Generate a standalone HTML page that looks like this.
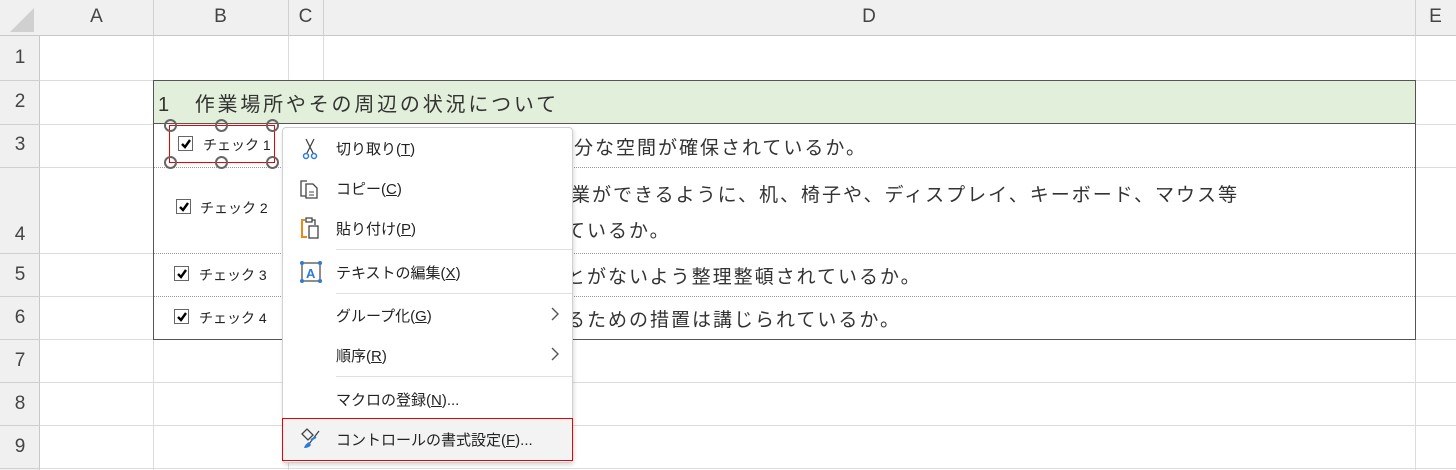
<!DOCTYPE html>
<html><head><meta charset="utf-8"><style>
*{margin:0;padding:0;box-sizing:border-box}
body{width:1456px;height:470px;overflow:hidden;background:#fff;position:relative;font-family:"Liberation Sans","Noto Sans CJK JP",sans-serif;color:#333}
.a{position:absolute}
.hd{background:#f0f0f0;color:#444;font-size:19px;text-align:center}
.vl{position:absolute;width:1px;background:#dcdcdc}
.hl{position:absolute;height:1px;background:#dcdcdc}
.dt{position:absolute;height:0;border-top:1px dotted #999}
.t{position:absolute;font-size:19px;color:#333;white-space:nowrap;letter-spacing:2px}
.cb{position:absolute;width:15px;height:15px;border:1px solid #666;background:#fff}
.cb svg{position:absolute;left:1px;top:1px}
.cl{position:absolute;font-size:14px;color:#222;white-space:nowrap}
.h{position:absolute;width:13px;height:13px;border:2.5px solid #666;border-radius:50%;background:transparent}
.mi{position:absolute;left:336px;font-size:15px;color:#222;white-space:nowrap}
.sep{position:absolute;left:336px;width:236px;height:1px;background:#e0e0e0}
u{text-decoration:underline}
</style></head><body>
<div class="a hd" style="left:0;top:0;width:1456px;height:36px;border-bottom:1px solid #c8c8c8"></div>
<div class="a hd" style="left:0;top:36px;width:40px;height:434px;border-right:1px solid #c8c8c8"></div>
<svg class="a" style="left:10px;top:8px" width="24" height="24"><polygon points="24,0 24,24 0,24" fill="#d0d0d0"/></svg>
<div class="a hd" style="left:40px;top:6px;width:113px;background:none">A</div>
<div class="a hd" style="left:153px;top:6px;width:135px;background:none">B</div>
<div class="a hd" style="left:288px;top:6px;width:35px;background:none">C</div>
<div class="a hd" style="left:323px;top:6px;width:1092px;background:none">D</div>
<div class="a hd" style="left:1415px;top:6px;width:41px;background:none">E</div>
<div class="vl" style="left:153px;top:0;height:36px;background:#d0d0d0"></div>
<div class="vl" style="left:288px;top:0;height:36px;background:#d0d0d0"></div>
<div class="vl" style="left:323px;top:0;height:36px;background:#d0d0d0"></div>
<div class="vl" style="left:1415px;top:0;height:36px;background:#d0d0d0"></div>
<div class="a hd" style="left:0;top:47px;width:40px;background:none">1</div>
<div class="a hd" style="left:0;top:91px;width:40px;background:none">2</div>
<div class="a hd" style="left:0;top:134px;width:40px;background:none">3</div>
<div class="a hd" style="left:0;top:224px;width:40px;background:none">4</div>
<div class="a hd" style="left:0;top:264px;width:40px;background:none">5</div>
<div class="a hd" style="left:0;top:307px;width:40px;background:none">6</div>
<div class="a hd" style="left:0;top:350px;width:40px;background:none">7</div>
<div class="a hd" style="left:0;top:393px;width:40px;background:none">8</div>
<div class="a hd" style="left:0;top:436px;width:40px;background:none">9</div>
<div class="hl" style="left:0;top:80px;width:40px;background:#d0d0d0"></div>
<div class="hl" style="left:0;top:124px;width:40px;background:#d0d0d0"></div>
<div class="hl" style="left:0;top:167px;width:40px;background:#d0d0d0"></div>
<div class="hl" style="left:0;top:253px;width:40px;background:#d0d0d0"></div>
<div class="hl" style="left:0;top:296px;width:40px;background:#d0d0d0"></div>
<div class="hl" style="left:0;top:339px;width:40px;background:#d0d0d0"></div>
<div class="hl" style="left:0;top:382px;width:40px;background:#d0d0d0"></div>
<div class="hl" style="left:0;top:425px;width:40px;background:#d0d0d0"></div>
<div class="hl" style="left:0;top:468px;width:40px;background:#d0d0d0"></div>
<div class="hl" style="left:40px;top:80px;width:1416px"></div>
<div class="hl" style="left:40px;top:124px;width:1416px"></div>
<div class="hl" style="left:40px;top:167px;width:1416px"></div>
<div class="hl" style="left:40px;top:253px;width:1416px"></div>
<div class="hl" style="left:40px;top:296px;width:1416px"></div>
<div class="hl" style="left:40px;top:339px;width:1416px"></div>
<div class="hl" style="left:40px;top:382px;width:1416px"></div>
<div class="hl" style="left:40px;top:425px;width:1416px"></div>
<div class="hl" style="left:40px;top:468px;width:1416px"></div>
<div class="vl" style="left:153px;top:36px;height:434px"></div>
<div class="vl" style="left:288px;top:36px;height:44px"></div>
<div class="vl" style="left:323px;top:36px;height:44px"></div>
<div class="vl" style="left:288px;top:339px;height:131px"></div>
<div class="vl" style="left:1415px;top:36px;height:434px"></div>
<div class="a" style="left:153px;top:80px;width:1263px;height:260px;border:1px solid #555;background:#fff"></div>
<div class="a" style="left:154px;top:81px;width:1261px;height:43px;background:#e2efda;border-bottom:1px solid #555"></div>
<div class="dt" style="left:154px;top:167px;width:1261px"></div>
<div class="dt" style="left:154px;top:253px;width:1261px"></div>
<div class="dt" style="left:154px;top:296px;width:1261px"></div>
<div class="t" style="left:158px;top:88px;font-size:20px;letter-spacing:2.8px">1　作業場所やその周辺の状況について</div>
<div class="t" style="left:574px;top:133px">分な空間が確保されているか。</div>
<div class="t" style="left:571px;top:180px">業ができるように、机、椅子や、ディスプレイ、キーボード、マウス等</div>
<div class="t" style="left:566px;top:216px">ているか。</div>
<div class="t" style="left:566px;top:262px">とがないよう整理整頓されているか。</div>
<div class="t" style="left:566px;top:305px">るための措置は講じられているか。</div>
<div class="cb" style="left:178px;top:136px"><svg width="12" height="12"><path d="M2 6 L5 9 L10 2" stroke="#000" stroke-width="2.4" fill="none"/></svg></div>
<div class="cl" style="left:203px;top:135px">チェック 1</div>
<div class="cb" style="left:176px;top:199px"><svg width="12" height="12"><path d="M2 6 L5 9 L10 2" stroke="#000" stroke-width="2.4" fill="none"/></svg></div>
<div class="cl" style="left:200px;top:198px">チェック 2</div>
<div class="cb" style="left:174px;top:266px"><svg width="12" height="12"><path d="M2 6 L5 9 L10 2" stroke="#000" stroke-width="2.4" fill="none"/></svg></div>
<div class="cl" style="left:199px;top:265px">チェック 3</div>
<div class="cb" style="left:174px;top:309px"><svg width="12" height="12"><path d="M2 6 L5 9 L10 2" stroke="#000" stroke-width="2.4" fill="none"/></svg></div>
<div class="cl" style="left:199px;top:308px">チェック 4</div>
<div class="a" style="left:169px;top:125px;width:106px;height:38px;border:1.5px solid #e00"></div>
<div class="h" style="left:164px;top:119px"></div>
<div class="h" style="left:215px;top:119px"></div>
<div class="h" style="left:266px;top:119px"></div>
<div class="h" style="left:164px;top:156px"></div>
<div class="h" style="left:215px;top:156px"></div>
<div class="h" style="left:266px;top:156px"></div>
<div class="a" style="left:282px;top:127px;width:291px;height:336px;background:#fff;border:1px solid #d0d0d0;border-radius:4px;box-shadow:1px 2px 4px rgba(0,0,0,.15)"></div>
<svg class="a" style="left:298px;top:137px" width="24" height="24"><path d="M8 2 L15 16 M16 2 L9 16" stroke="#444" stroke-width="1.3" fill="none"/><circle cx="8" cy="19" r="2.5" stroke="#2e7bd6" stroke-width="1.5" fill="none"/><circle cx="16" cy="19" r="2.5" stroke="#2e7bd6" stroke-width="1.5" fill="none"/></svg>
<div class="mi" style="top:138px">切り取り(<u>T</u>)</div>
<svg class="a" style="left:298px;top:177px" width="24" height="24"><path d="M9 4 H3 V19 H8" stroke="#444" stroke-width="1.3" fill="none"/><path d="M8 7 H15 L19 11 V21 H8 Z" stroke="#444" stroke-width="1.3" fill="none"/><path d="M11 15 H16 M11 18 H16" stroke="#444" stroke-width="1"/></svg>
<div class="mi" style="top:178px">コピー(<u>C</u>)</div>
<svg class="a" style="left:298px;top:216px" width="24" height="24"><path d="M7 4 H4 V21 H9" stroke="#e88a1a" stroke-width="2" fill="none"/><path d="M8 2 H14 V6 H8 Z M14 4 H17 V9" stroke="#444" stroke-width="1.3" fill="none"/><rect x="11" y="10" width="9" height="12" stroke="#444" stroke-width="1.3" fill="none"/></svg>
<div class="mi" style="top:218px">貼り付け(<u>P</u>)</div>
<div class="sep" style="top:249px"></div>
<svg class="a" style="left:298px;top:259px" width="26" height="26"><rect x="4" y="4" width="18" height="18" stroke="#444" stroke-width="1.2" fill="none"/><circle cx="4" cy="4" r="2" fill="#2e7bd6"/><circle cx="22" cy="4" r="2" fill="#2e7bd6"/><circle cx="4" cy="22" r="2" fill="#2e7bd6"/><circle cx="22" cy="22" r="2" fill="#2e7bd6"/><text x="8" y="19" font-size="13" font-weight="bold" fill="#2e7bd6" font-family="Liberation Sans">A</text></svg>
<div class="mi" style="top:262px">テキストの編集(<u>X</u>)</div>
<div class="sep" style="top:293px"></div>
<div class="mi" style="top:305px">グループ化(<u>G</u>)</div>
<svg class="a" style="left:550px;top:307px" width="10" height="14"><path d="M2 1 L8 7 L2 13" stroke="#555" stroke-width="1.4" fill="none"/></svg>
<div class="mi" style="top:345px">順序(<u>R</u>)</div>
<svg class="a" style="left:550px;top:347px" width="10" height="14"><path d="M2 1 L8 7 L2 13" stroke="#555" stroke-width="1.4" fill="none"/></svg>
<div class="sep" style="top:376px"></div>
<div class="mi" style="top:389px">マクロの登録(<u>N</u>)...</div>
<div class="a" style="left:282px;top:418px;width:291px;height:43px;background:#f3f3f3;border:1.5px solid #e00"></div>
<svg class="a" style="left:298px;top:426px" width="26" height="26"><path d="M4 8 L9 3 L15 9 L10 14 Z" stroke="#444" stroke-width="1.3" fill="none"/><path d="M21 5 L11 18" stroke="#444" stroke-width="1.3"/><path d="M11 16 Q7 18 6 22 Q11 22 13 19 Z" fill="#2e7bd6"/><path d="M13 14 L18 11" stroke="#2e7bd6" stroke-width="2"/></svg>
<div class="mi" style="top:429px">コントロールの書式設定(<u>F</u>)...</div>
</body></html>
